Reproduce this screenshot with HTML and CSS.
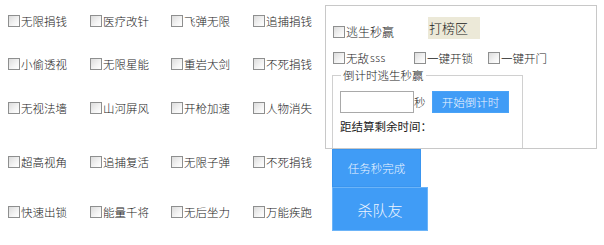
FILE: index.html
```html
<!DOCTYPE html>
<html lang="zh-CN">
<head>
<meta charset="utf-8">
<title>辅助</title>
<link rel="stylesheet" href="styles.css">
</head>
<body>
<div class="page">
  <div class="grid">
    <label class="cb"><span class="box"></span>无限捐钱</label>
    <label class="cb"><span class="box"></span>医疗改针</label>
    <label class="cb"><span class="box"></span>飞弹无限</label>
    <label class="cb"><span class="box"></span>追捕捐钱</label>

    <label class="cb"><span class="box"></span>小偷透视</label>
    <label class="cb"><span class="box"></span>无限星能</label>
    <label class="cb"><span class="box"></span>重岩大剑</label>
    <label class="cb"><span class="box"></span>不死捐钱</label>

    <label class="cb"><span class="box"></span>无视法墙</label>
    <label class="cb"><span class="box"></span>山河屏风</label>
    <label class="cb"><span class="box"></span>开枪加速</label>
    <label class="cb"><span class="box"></span>人物消失</label>

    <label class="cb"><span class="box"></span>超高视角</label>
    <label class="cb"><span class="box"></span>追捕复活</label>
    <label class="cb"><span class="box"></span>无限子弹</label>
    <label class="cb"><span class="box"></span>不死捐钱</label>

    <label class="cb"><span class="box"></span>快速出锁</label>
    <label class="cb"><span class="box"></span>能量千将</label>
    <label class="cb"><span class="box"></span>无后坐力</label>
    <label class="cb"><span class="box"></span>万能疾跑</label>
  </div>

  <div class="side">
    <div class="panel">
      <div class="row1">
        <label class="cb cb-escape"><span class="box"></span>逃生秒赢</label>
        <div class="tag">打榜区</div>
      </div>
      <div class="row2">
        <label class="cb cb-w1"><span class="box"></span>无敌<span class="latin">sss</span></label>
        <label class="cb cb-w2"><span class="box"></span>一键开锁</label>
        <label class="cb"><span class="box"></span>一键开门</label>
      </div>
      <fieldset class="group">
        <legend>倒计时逃生秒赢</legend>
        <div class="timer-row">
          <div class="input"></div>
          <span class="unit">秒</span>
          <div class="btn btn-start">开始倒计时</div>
        </div>
        <div class="remain">距结算剩余时间：</div>
      </fieldset>
    </div>
    <div class="btn btn-task">任务秒完成</div>
    <div class="btn btn-kill">杀队友</div>
  </div>
</div>
</body>
</html>
```
FILE: styles.css
```css
html, body {
  margin: 0;
  padding: 0;
  background: #ffffff;
}

body {
  font-family: "Noto Sans CJK SC", "Noto Sans", sans-serif;
  font-size: 11.5px;
  font-weight: 300;
  color: #1a1a1a;
}

.page {
  display: flex;
  width: 604px;
  height: 245px;
  overflow: hidden;
}

.grid {
  box-sizing: border-box;
  width: 325px;
  padding: 15px 0 0 8px;
  display: grid;
  grid-template-columns: 82px 81px 82px 72px;
  grid-template-rows: 43px 44px 54px 50px 30px;
  align-items: start;
}

.cb {
  display: flex;
  align-items: center;
  gap: 1px;
  height: 12px;
  line-height: 12px;
  white-space: nowrap;
}

.box {
  display: inline-block;
  box-sizing: border-box;
  width: 12px;
  height: 12px;
  border: 1px solid #8e8f8f;
  background: linear-gradient(135deg, #dcdcdc 0%, #f4f4f4 60%, #ffffff 100%);
  flex: none;
}

.latin {
  font-size: 10.5px;
  letter-spacing: 0.5px;
}

.side {
  display: flex;
  flex-direction: column;
  padding-top: 5px;
}

.panel {
  box-sizing: border-box;
  width: 272px;
  height: 144px;
  border: 1px solid #c8c8c8;
  overflow: hidden;
}

.row1 {
  display: flex;
  align-items: flex-start;
  margin-top: 11px;
  padding-left: 7px;
}

.cb-escape {
  width: 95px;
  margin-top: 9px;
  font-size: 12px;
}

.tag {
  width: 52px;
  height: 22px;
  line-height: 22px;
  background: #ece9d8;
  font-size: 13px;
  color: #222;
  padding-left: 1px;
  box-sizing: border-box;
}

.row2 {
  display: flex;
  margin-top: 13px;
  padding-left: 7px;
}

.cb-w1 { width: 81px; }
.cb-w2 { width: 74px; }

.group {
  box-sizing: border-box;
  width: 191px;
  height: 130px;
  margin: 3px 0 0 6px;
  padding: 8px 0 0 7px;
  border: 1px solid #d0d0d0;
  min-width: 0;
}

.group legend {
  padding: 0 2px;
  margin-left: 1px;
  line-height: 16px;
  font-size: 11.5px;
}

.timer-row {
  display: flex;
  align-items: center;
}

.input {
  box-sizing: border-box;
  width: 74px;
  height: 22px;
  border: 1px solid #a9a9a9;
  background: #fff;
}

.unit {
  width: 18px;
  font-size: 11.5px;
}

.btn {
  box-sizing: border-box;
  display: flex;
  align-items: center;
  justify-content: center;
  background: #409cf6;
  color: #eef5ff;
  border: 1px solid #4aa3f7;
}

.btn-start {
  width: 77px;
  height: 22px;
  font-size: 11.5px;
}

.remain {
  margin-top: 6px;
  line-height: 14px;
  font-size: 11.5px;
  font-weight: 400;
}

.btn-task {
  width: 89px;
  height: 38px;
  margin-left: 7px;
  font-size: 11.5px;
  border-color: #3a95ef;
}

.btn-kill {
  width: 96px;
  height: 44px;
  margin-left: 7px;
  font-size: 15px;
  border-color: #6cb4f8;
}
```
